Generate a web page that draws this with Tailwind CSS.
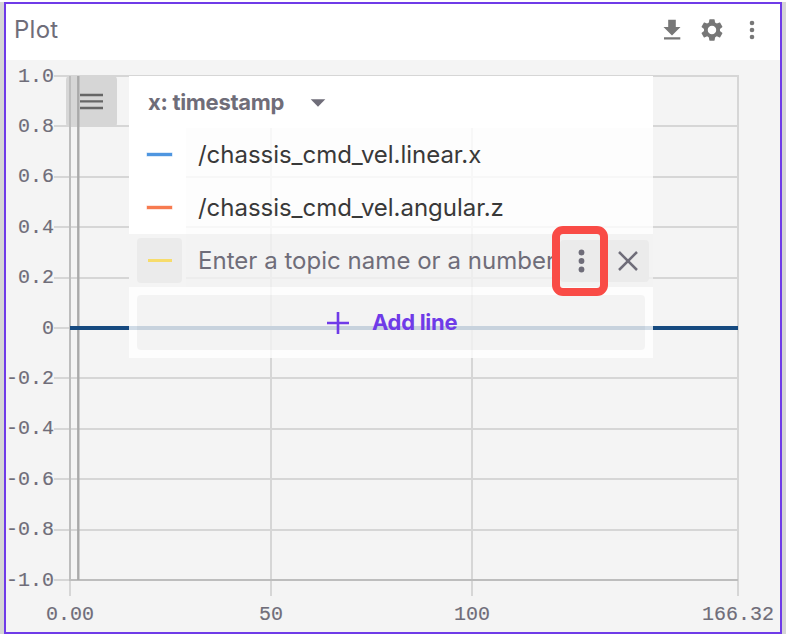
<!DOCTYPE html>
<html lang="en">
<head>
<meta charset="utf-8">
<title>Plot</title>
<script src="https://cdn.jsdelivr.net/npm/@tailwindcss/browser@4"></script>
</head>
<body class="h-[634px] w-[786px] overflow-hidden bg-white pt-[2px] font-['Inter',sans-serif]">
<div class="h-[632px] bg-[#d6d6d6] px-1">
  <section class="flex h-full flex-col border-2 border-[#6f3be8] bg-[#f4f4f4]">
    <header class="flex h-14 shrink-0 items-center bg-white pl-2">
      <h1 class="grow pb-1 text-[24px] leading-8 tracking-[0.25px] text-[#6f6d79]">Plot</h1>
      <div class="flex items-center pb-1 text-[#777777]">
        <svg class="size-10" viewBox="0 0 40 40" fill="currentColor"><path d="M16.2 9.7h7.6v7.2h4.7L20 25.6l-8.5-8.7h4.7zM12 27.2h16.3v2.3H12z"/></svg>
        <svg class="size-10" viewBox="0 0 40 40"><g transform="translate(6.6 6.6) scale(1.115)" fill="currentColor"><path d="M19.14 12.94c.04-.3.06-.61.06-.94 0-.32-.02-.64-.07-.94l2.03-1.58c.18-.14.23-.41.12-.61l-1.92-3.32c-.12-.22-.37-.29-.59-.22l-2.39.96c-.5-.38-1.03-.7-1.62-.94l-.36-2.54c-.04-.24-.24-.41-.48-.41h-3.84c-.24 0-.43.17-.47.41l-.36 2.54c-.59.24-1.13.57-1.62.94l-2.39-.96c-.22-.08-.47 0-.59.22L2.74 8.87c-.12.21-.08.47.12.61l2.03 1.58c-.05.3-.09.63-.09.94s.02.64.07.94l-2.03 1.58c-.18.14-.23.41-.12.61l1.92 3.32c.12.22.37.29.59.22l2.39-.96c.5.38 1.03.7 1.62.94l.36 2.54c.05.24.24.41.48.41h3.84c.24 0 .44-.17.47-.41l.36-2.54c.59-.24 1.13-.56 1.62-.94l2.39.96c.22.08.47 0 .59-.22l1.92-3.32c.12-.22.07-.47-.12-.61l-2.01-1.58zM12 15.8a3.8 3.8 0 1 1 0-7.6 3.8 3.8 0 0 1 0 7.6z"/></g></svg>
        <svg class="mr-2 size-10" viewBox="0 0 40 40" fill="currentColor"><circle cx="20" cy="13" r="2.3"/><circle cx="20" cy="20" r="2.3"/><circle cx="20" cy="27" r="2.3"/></svg>
      </div>
    </header>

    <div class="relative grow">
      <!-- Chart area: grid, axes, series and tick labels -->
      <svg class="absolute inset-0" width="774" height="572" viewBox="6 60 774 572">
        <path stroke="#d6d6d6" stroke-width="2" fill="none" d="M54 76H739M54 126H739M54 177H739M54 227H739M54 278H739M54 328H739M54 378H739M54 429H739M54 479H739M54 530H739M54 580H739M70 75V596M271 75V596M472 75V596M738 75V596"/>
        <rect x="66" y="76" width="51" height="51" rx="4" fill="#d6d6d6"/>
        <path stroke="#bdbdbd" stroke-width="2" fill="none" d="M70 76V580H738"/>
        <path stroke="#a9a9a9" stroke-width="2.4" d="M78.3 76V580"/>
        <path stroke="#164a80" stroke-width="4" d="M70 328H738"/>
        <path stroke="#666666" stroke-width="2.3" d="M80 95H103M80 101.400H103M80 108H103"/>
        <g class="font-['Liberation_Mono',monospace] text-[20px]" fill="#6f6d79" stroke="#6f6d79" stroke-width=".15">
          <g text-anchor="end">
            <text x="54" y="82">1.0</text><text x="54" y="132">0.8</text><text x="54" y="182">0.6</text><text x="54" y="233">0.4</text><text x="54" y="283">0.2</text><text x="54" y="334">0</text><text x="54" y="384">-0.2</text><text x="54" y="434">-0.4</text><text x="54" y="485">-0.6</text><text x="54" y="535">-0.8</text><text x="54" y="586">-1.0</text>
          </g>
          <g text-anchor="middle">
            <text x="70" y="620">0.00</text><text x="271" y="620">50</text><text x="472" y="620">100</text><text x="738" y="620">166.32</text>
          </g>
        </g>
      </svg>

      <!-- Series legend floating over the chart -->
      <div class="absolute left-[123px] top-4 flex w-[524px] flex-col">
        <div class="flex h-[52px] items-center bg-white pl-[19px] text-[22px] font-bold tracking-[-0.3px] text-[#6f6d79]">
          <span class="w-[160px] whitespace-nowrap">x: timestamp</span>
          <svg class="ml-[2px] mt-px h-2 w-4" viewBox="0 0 16 8" fill="currentColor"><path d="M.7.3h14.600L8 7.700z"/></svg>
        </div>
        <div class="flex h-[53px] text-[24px] text-[#393939]">
          <div class="flex w-[57px] items-center bg-white pl-[18px]"><div class="h-[3px] w-[25px] bg-[#4f96e0] shadow-[0_0_0_0.5px_#4f96e066]"></div></div>
          <div class="flex grow items-center whitespace-nowrap bg-white/80 pl-3 tracking-[-0.03px]">/chassis_cmd_vel.linear.x</div>
        </div>
        <div class="flex h-[53px] text-[24px] text-[#393939]">
          <div class="flex w-[57px] items-center bg-white pl-[18px]"><div class="h-[3px] w-[25px] bg-[#f77b50] shadow-[0_0_0_0.5px_#f77b5066]"></div></div>
          <div class="flex grow items-center whitespace-nowrap bg-white/80 pl-3 tracking-[-0.03px]">/chassis_cmd_vel.angular.z</div>
        </div>
        <div class="relative flex h-[53px] items-center bg-[#f2f2f2]/80 text-[24px] text-[#6f6d79]">
          <div class="flex h-full w-[57px] items-center bg-[#f4f4f4] pl-2"><div class="flex h-[45px] w-[45px] items-center justify-center rounded bg-[#ebebeb]"><div class="h-[3px] w-6 bg-[#f7dc6b]"></div></div></div>
          <div class="whitespace-nowrap pl-3 tracking-[0.03px]">Enter a topic name or a number</div>
          <div class="absolute left-[431px] top-[6px] flex h-[42px] w-[89px] items-center rounded bg-[#ebebeb]">
            <svg class="h-[42px] w-[42px]" viewBox="0 0 42 42" fill="currentColor"><circle cx="21.500" cy="12.500" r="2.900"/><circle cx="21.500" cy="21" r="2.900"/><circle cx="21.500" cy="29.500" r="2.900"/></svg>
            <svg class="h-[42px] w-[47px]" viewBox="0 0 47 42" fill="none" stroke="currentColor" stroke-width="2.500"><path d="M17 12l18 18M35 12l-18 18"/></svg>
          </div>
          <div class="absolute left-[423px] top-[-8px] h-[70px] w-[56px] rounded-[11px] border-8 border-[#f94b46]"></div>
        </div>
        <div class="h-[71px] bg-white/80 p-2">
          <button class="flex h-[55px] w-full items-center rounded bg-black/4 pl-[190px] text-[22px] font-bold tracking-[-0.3px] text-[#6f3be8]">
            <svg class="mr-[23px] size-[22px]" viewBox="0 0 22 22" fill="none" stroke="currentColor" stroke-width="2.600"><path d="M0 11h22M11 0v22"/></svg>Add line
          </button>
        </div>
      </div>
    </div>
  </section>
</div>
</body>
</html>
